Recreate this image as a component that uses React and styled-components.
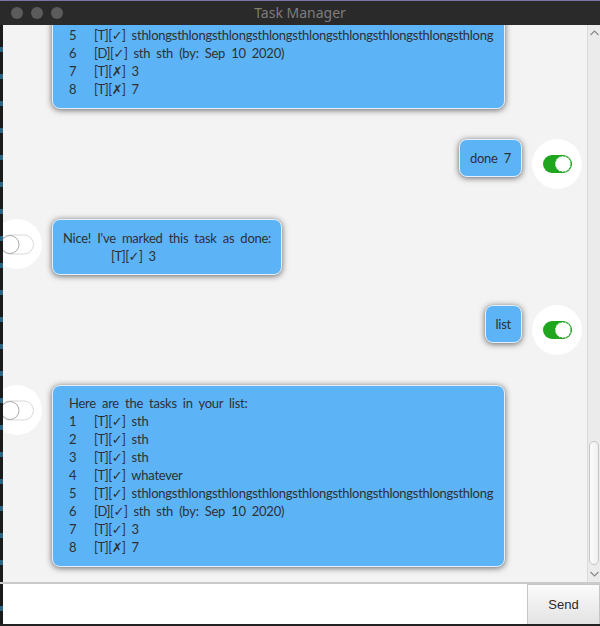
import React from 'react';
import styled, { createGlobalStyle } from 'styled-components';

const GlobalStyle = createGlobalStyle`
  html, body {
    margin: 0;
    padding: 0;
    background: #2b2b2b;
    overflow: hidden;
  }
  * { box-sizing: border-box; }
`;

const Window = styled.div`
  width: 600px;
  height: 626px;
  display: flex;
  flex-direction: column;
  background: #2b2b2b;
  border-top: 1px solid #7c72a3;
`;

const TitleBar = styled.div`
  height: 24px;
  flex: none;
  display: flex;
  align-items: center;
  position: relative;
  background: #2a2a2a;
  padding-left: 11px;
  gap: 8px;
`;

const Light = styled.span`
  width: 12px;
  height: 12px;
  border-radius: 50%;
  background: #5b5b5b;
`;

const Title = styled.div`
  position: absolute;
  left: 0;
  right: 0;
  top: 0;
  line-height: 24px;
  text-align: center;
  font-family: "Noto Sans", "DejaVu Sans", sans-serif;
  font-size: 14px;
  color: #7d7d7d;
  pointer-events: none;
`;

const Body = styled.div`
  flex: 1;
  display: flex;
  min-height: 0;
`;

const Edge = styled.div`
  width: 3px;
  flex: none;
  background: repeating-linear-gradient(
    180deg,
    #1b1b1b 0px,
    #1b1b1b 22px,
    #2a6480 22px,
    #2a6480 27px
  );
`;

const ScrollPane = styled.div`
  flex: 1;
  overflow: hidden;
  background: #f3f3f3;
  display: flex;
  flex-direction: column;
  justify-content: flex-end;
`;

const Row = styled.div`
  flex: none;
  display: flex;
  align-items: flex-start;
  justify-content: ${p => (p.$user ? 'flex-end' : 'flex-start')};
  gap: 10px;
  padding: 15px 5px 15px 0;
`;

const Avatar = styled.div`
  width: 50px;
  height: 50px;
  flex: none;
  border-radius: 50%;
  background: #ffffff;
  display: flex;
  align-items: center;
  justify-content: center;
  margin-left: ${p => (p.$bot ? '-11px' : '0')};
`;

const Bubble = styled.div`
  background: #5cb4f7;
  border: 1px solid #e2effc;
  border-radius: 8px;
  box-shadow: 0 1px 6px rgba(0, 0, 0, 0.6);
  padding: ${p => (p.$list ? '8px 11px 10px 16px' : '9px 10px')};
  font-family: Lato, "DejaVu Sans", sans-serif;
  font-size: 13px;
  line-height: 18px;
  letter-spacing: -0.26px;
  word-spacing: 3px;
  color: #2f3034;
  white-space: nowrap;
`;

const Line = styled.div`
  padding-left: ${p => p.$indent || 0}px;
`;

const Num = styled.span`
  display: inline-block;
  width: 25px;
`;

const Tag = styled.span`
  letter-spacing: -0.5px;
`;

const ScrollBar = styled.div`
  width: 13px;
  flex: none;
  background: #ebebeb;
  border-left: 1px solid #dadada;
  display: flex;
  flex-direction: column;
`;

const Arrow = styled.div`
  height: 16px;
  flex: none;
  display: flex;
  align-items: center;
  justify-content: center;
`;

const Track = styled.div`
  flex: 1;
  display: flex;
  flex-direction: column;
  justify-content: flex-end;
  padding: 0 1px 1px 1px;
`;

const Thumb = styled.div`
  height: 124px;
  border: 1px solid #c4c4c4;
  border-radius: 5px;
  background: linear-gradient(90deg, #fbfbfb, #f0f0f0);
`;

const InputBar = styled.div`
  height: 44px;
  flex: none;
  display: flex;
  background: #f3f3f3;
  border-top: 2px solid #cacaca;
  border-bottom: 2px solid #222;
`;

const TextField = styled.input`
  flex: 1;
  border: none;
  border-bottom-left-radius: 3px;
  background: #ffffff;
  outline: none;
  font-family: Lato, sans-serif;
  font-size: 13px;
`;

const SendButton = styled.button`
  width: 73px;
  flex: none;
  border: 1px solid #c6c6c6;
  border-bottom: none;
  background: linear-gradient(180deg, #fbfbfb, #e3e3e3);
  font-family: "Liberation Sans", sans-serif;
  font-size: 13px;
  color: #2a2a2a;
  padding: 0;
`;

const OnToggle = () => (
  <svg width="31" height="20" viewBox="0 0 31 20">
    <rect x="1" y="1" width="29" height="18" rx="9" fill="#1ea61e" />
    <circle cx="21" cy="10" r="8" fill="#fff" stroke="#1ea61e" strokeWidth="1" strokeDasharray="2 1.4" />
  </svg>
);

const OffToggle = () => (
  <svg width="34" height="21" viewBox="0 0 34 21">
    <rect x="0.5" y="1" width="33" height="19" rx="9.5" fill="#fff" stroke="#d9d9d9" />
    <circle cx="10" cy="10.5" r="9" fill="#fff" stroke="#a9a9a9" strokeWidth="1" />
  </svg>
);

const Chevron = ({ up }) => (
  <svg width="9" height="6" viewBox="0 0 9 6">
    <path d={up ? 'M0.5 5 L4.5 1 L8.5 5' : 'M0.5 1 L4.5 5 L8.5 1'} fill="none" stroke="#8a8a8a" strokeWidth="1.2" />
  </svg>
);

const longName = 'sthlong'.repeat(9);

const firstList = [
  ['T', true, 'sth'],
  ['T', true, 'sth'],
  ['T', true, 'sth'],
  ['T', true, 'whatever'],
  ['T', true, longName],
  ['D', true, 'sth sth (by: Sep 10 2020)'],
  ['T', false, '3'],
  ['T', false, '7'],
];

const secondList = firstList.map((t, i) => (i === 6 ? ['T', true, '3'] : t));

const TaskList = ({ tasks }) => (
  <Bubble $list>
    <Line>Here are the tasks in your list:</Line>
    {tasks.map(([type, done, desc], i) => (
      <Line key={i}>
        <Num>{i + 1}</Num>
        <Tag>[{type}][{done ? '✓' : '✗'}]</Tag> {desc}
      </Line>
    ))}
  </Bubble>
);

const BotRow = ({ children }) => (
  <Row>
    <Avatar $bot><OffToggle /></Avatar>
    {children}
  </Row>
);

const UserRow = ({ text }) => (
  <Row $user>
    <Bubble>{text}</Bubble>
    <Avatar><OnToggle /></Avatar>
  </Row>
);

export default function App() {
  return (
    <>
      <GlobalStyle />
      <Window>
        <TitleBar>
          <Light />
          <Light />
          <Light />
          <Title>Task Manager</Title>
        </TitleBar>
        <Body>
          <Edge />
          <ScrollPane>
            <BotRow><TaskList tasks={firstList} /></BotRow>
            <UserRow text="done 7" />
            <BotRow>
              <Bubble>
                <Line>Nice! I've marked this task as done:</Line>
                <Line $indent={48}><Tag>[T][✓]</Tag> 3</Line>
              </Bubble>
            </BotRow>
            <UserRow text="list" />
            <BotRow><TaskList tasks={secondList} /></BotRow>
          </ScrollPane>
          <ScrollBar>
            <Arrow><Chevron up /></Arrow>
            <Track><Thumb /></Track>
            <Arrow><Chevron /></Arrow>
          </ScrollBar>
        </Body>
        <InputBar>
          <Edge />
          <TextField />
          <SendButton>Send</SendButton>
        </InputBar>
      </Window>
    </>
  );
}
